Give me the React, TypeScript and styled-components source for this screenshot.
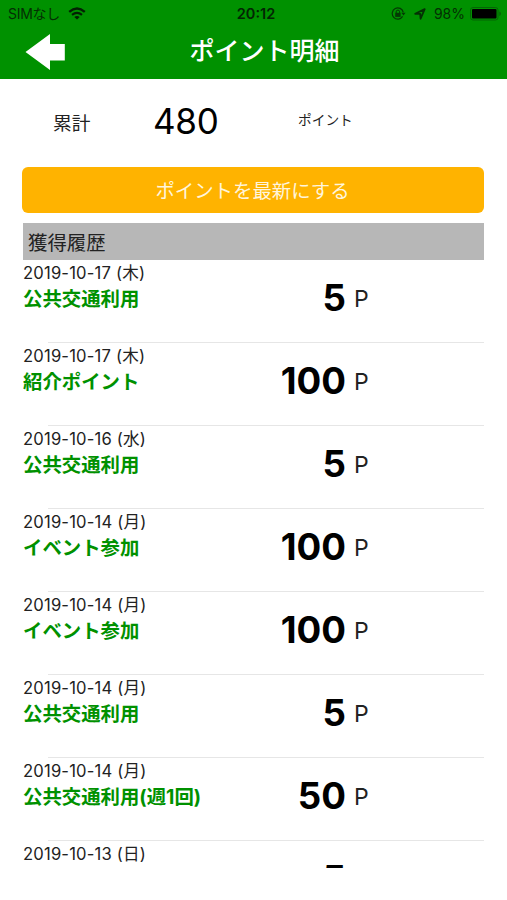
import React from 'react';
import styled, { createGlobalStyle } from 'styled-components';

const GlobalStyle = createGlobalStyle`
  * { box-sizing: border-box; }
  html, body { margin: 0; padding: 0; background: #fff; }
  body { font-family: Inter, "Noto Sans CJK JP", sans-serif; color: #111; }
`;

const Screen = styled.div`
  width: 507px;
  height: 900px;
  overflow: hidden;
  background: #fff;
`;

const Header = styled.header`
  height: 79px;
  background: #009100;
`;

const StatusBar = styled.div`
  display: grid;
  grid-template-columns: 1fr auto 1fr;
  align-items: center;
  height: 27px;
  padding: 0 5px 0 8px;
  font-size: 14px;
  line-height: 27px;
  color: #042e04;
`;

const Carrier = styled.div`
  display: flex;
  align-items: center;
  gap: 8px;
  letter-spacing: -0.3px;
`;

const Clock = styled.div`
  padding-left: 2px;
  font-size: 14.5px;
  font-weight: 600;
  color: #032503;
`;

const StatusIcons = styled.div`
  display: flex;
  align-items: center;
  justify-content: flex-end;
`;

const Percent = styled.span`
  margin: 0 5px 0 8px;
`;

const LocationIcon = styled.svg`
  margin-left: 8px;
`;

const NavBar = styled.div`
  display: grid;
  grid-template-columns: 100px 1fr 78px;
  height: 52px;
`;

const BackButton = styled.button`
  display: flex;
  padding: 7px 0 0 25px;
  border: 0;
  background: none;
`;

const Title = styled.h1`
  margin: 0;
  text-align: center;
  font-size: 25px;
  font-weight: 500;
  line-height: 48px;
  color: #fff;
`;

const Summary = styled.section`
  display: grid;
  grid-template-columns: 100px 145px 1fr;
  height: 88px;
  padding-left: 53px;
`;

const SummaryLabel = styled.span`
  font-size: 18.7px;
  line-height: 89px;
  color: #222;
`;

const Total = styled.span`
  font-size: 35px;
  line-height: 84px;
  letter-spacing: -0.3px;
  color: #000;
`;

const SummaryUnit = styled.span`
  font-size: 13.7px;
  line-height: 82px;
  color: #222;
`;

const RefreshButton = styled.button`
  display: block;
  width: 462px;
  height: 46px;
  margin: 0 0 10px 22px;
  padding: 2px 1px 0 0;
  border: 0;
  border-radius: 6px;
  background: #ffb300;
  font-family: inherit;
  font-size: 19.4px;
  line-height: 44px;
  color: #fff5dc;
`;

const HistoryHeading = styled.h2`
  width: 461px;
  height: 37px;
  margin: 0 0 0 23px;
  padding-left: 5px;
  background: #b7b7b7;
  font-size: 19.4px;
  font-weight: 400;
  line-height: 40px;
  color: #222;
`;

const HistoryList = styled.ul`
  height: 608px;
  margin: 0 23px;
  padding: 0;
  overflow: hidden;
  list-style: none;
`;

const Row = styled.li`
  display: grid;
  grid-template-columns: 203px 120px 1fr;
  height: 83.06px;
  background: linear-gradient(#e6e6e6, #e6e6e6) 25px 82px / 436px 1px no-repeat;
`;

const Entry = styled.div`
  white-space: nowrap;
`;

const EntryDate = styled.div`
  height: 26px;
  font-size: 16.6px;
  letter-spacing: 0.18px;
  line-height: 26px;
  color: #222;
`;

const EntryName = styled.div`
  font-size: 19.4px;
  font-weight: 700;
  line-height: 26px;
  color: #009100;
`;

const Points = styled.div`
  text-align: right;
  font-size: 36.7px;
  font-weight: 700;
  line-height: 76.5px;
  color: #000;
`;

const PointUnit = styled.div`
  padding-left: 8px;
  font-size: 23px;
  font-weight: 400;
  line-height: 78px;
  color: #222;
`;

const history = [
  { date: '2019-10-17 (木)', name: '公共交通利用', points: 5 },
  { date: '2019-10-17 (木)', name: '紹介ポイント', points: 100 },
  { date: '2019-10-16 (水)', name: '公共交通利用', points: 5 },
  { date: '2019-10-14 (月)', name: 'イベント参加', points: 100 },
  { date: '2019-10-14 (月)', name: 'イベント参加', points: 100 },
  { date: '2019-10-14 (月)', name: '公共交通利用', points: 5 },
  { date: '2019-10-14 (月)', name: '公共交通利用(週1回)', points: 50 },
  { date: '2019-10-13 (日)', name: '', points: 5 },
];

const Wifi = () => (
  <svg width="18" height="13" viewBox="0 0 18 13" fill="none" stroke="#032003">
    <path d="M1.2 4.8 Q9 -1.8 16.8 4.8" strokeWidth="2.4" />
    <path d="M4 7.9 Q9 3.8 14 7.9" strokeWidth="2.1" />
    <path d="M9 12.6 L6.3 9.9 Q9 7.9 11.7 9.9Z" fill="#032003" stroke="none" />
  </svg>
);

const RotationLock = () => (
  <svg width="15" height="13" viewBox="0 0 15 13" fill="none" stroke="#043804">
    <path d="M11.6 9.4 A5.6 5.6 0 1 1 12.3 5.3" strokeWidth="1.2" />
    <path d="M10.3 5.8 H14.6 L12.5 8.6Z" fill="#043804" stroke="none" />
    <rect x="4.2" y="5.8" width="5.4" height="4.1" fill="#043804" stroke="none" />
    <path d="M5.2 6 V4.8 A1.7 1.7 0 0 1 8.6 4.8 V6" strokeWidth="1" />
  </svg>
);

const Location = () => (
  <LocationIcon width="12" height="12" viewBox="0 0 12 12" fill="none" stroke="#043004" strokeWidth="1.8">
    <path d="M1.2 5.8 L10.7 1.1 L6.6 10.7 L6.2 5.9Z" strokeLinejoin="round" />
  </LocationIcon>
);

const Battery = () => (
  <svg width="32" height="14" viewBox="0 0 32 14">
    <rect x="0.5" y="0.5" width="27.5" height="12.5" rx="2.5" fill="none" stroke="#056505" />
    <rect x="2" y="2" width="24.5" height="9.5" rx="1" fill="#000" />
    <path d="M29.3 4.5 Q31 5 31 6.8 Q31 8.5 29.3 9Z" fill="#056505" />
  </svg>
);

export default function App() {
  return (
    <>
      <GlobalStyle />
      <Screen>
        <Header>
          <StatusBar>
            <Carrier>
              SIMなし
              <Wifi />
            </Carrier>
            <Clock>20:12</Clock>
            <StatusIcons>
              <RotationLock />
              <Location />
              <Percent>98%</Percent>
              <Battery />
            </StatusIcons>
          </StatusBar>
          <NavBar>
            <BackButton aria-label="戻る">
              <svg width="40" height="37" viewBox="0 0 40 37">
                <path d="M0.5 18 L25 0 V10 H39.8 V26.5 H25 V36Z" fill="#fff" />
              </svg>
            </BackButton>
            <Title>ポイント明細</Title>
          </NavBar>
        </Header>
        <Summary>
          <SummaryLabel>累計</SummaryLabel>
          <Total>480</Total>
          <SummaryUnit>ポイント</SummaryUnit>
        </Summary>
        <RefreshButton>ポイントを最新にする</RefreshButton>
        <HistoryHeading>獲得履歴</HistoryHeading>
        <HistoryList>
          {history.map((item, index) => (
            <Row key={index}>
              <Entry>
                <EntryDate>{item.date}</EntryDate>
                {item.name && <EntryName>{item.name}</EntryName>}
              </Entry>
              <Points>{item.points}</Points>
              {item.name && <PointUnit>P</PointUnit>}
            </Row>
          ))}
        </HistoryList>
      </Screen>
    </>
  );
}
